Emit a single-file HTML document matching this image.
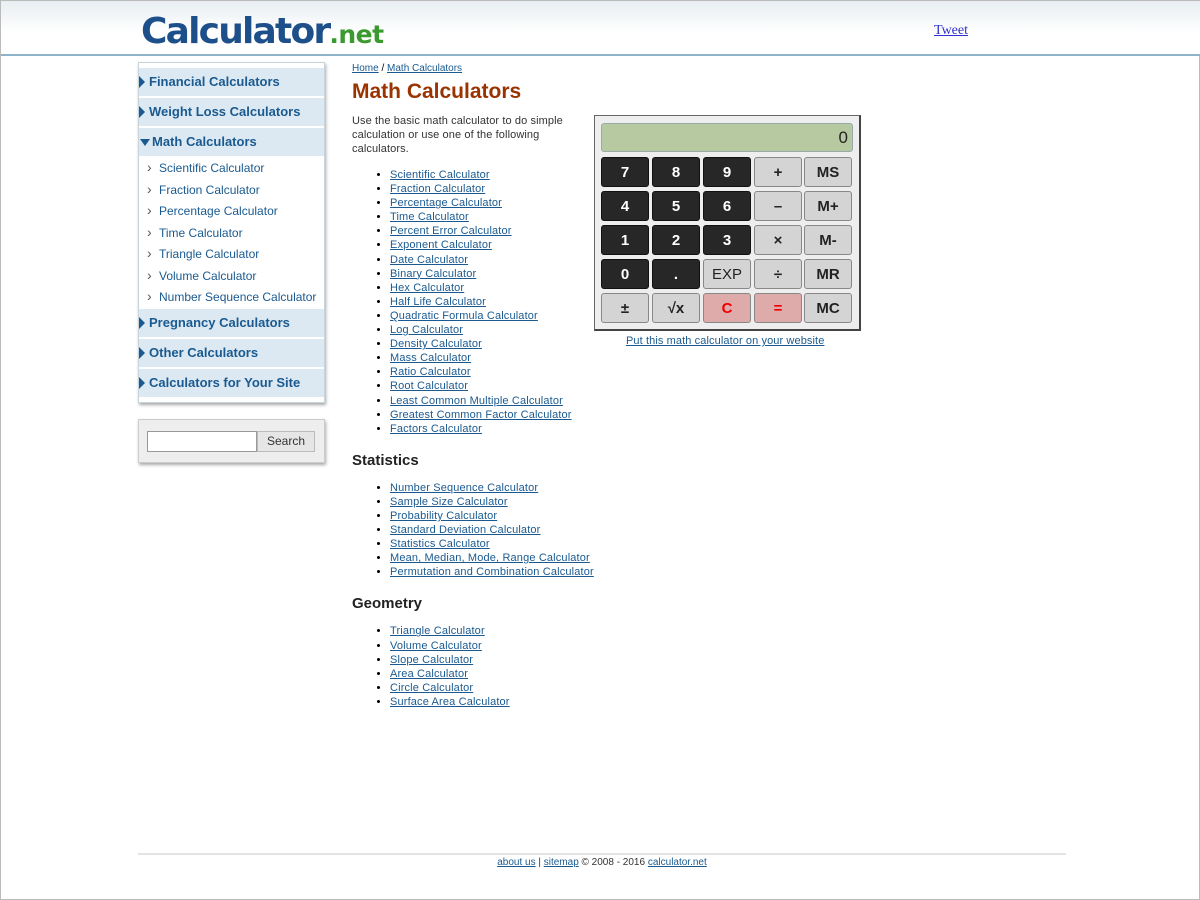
<!DOCTYPE html>
<html><head><meta charset="utf-8"><style>
*{margin:0;padding:0;box-sizing:border-box}
body{width:1200px;height:900px;position:relative;background:#fff;font-family:"Liberation Sans",Arial,sans-serif;overflow:hidden;border:1px solid #bbb}
a{color:#1a5a90;text-decoration:underline}
.hdr{position:absolute;left:0;top:0;width:1200px;height:55px;background:linear-gradient(#e8eef2,#fff 60%);border-bottom:2px solid #8fb3c8}
.logo{position:absolute;left:140px;top:10px;font-size:36px;font-weight:bold;letter-spacing:-1.8px;color:#1d4f8a;font-family:"DejaVu Sans","Liberation Sans",sans-serif}
.logo span{color:#3a9a2f;font-size:25px;letter-spacing:-0.5px}
.tweet{position:absolute;left:933px;top:22px;font-family:"Liberation Serif",serif;font-size:14px;color:#3030d0}
.side{position:absolute;left:137px;top:61px;width:187px;height:341px;border:1px solid #c8d4dc;box-shadow:1px 2px 3px #aaa;background:#fff;padding-top:5px}
.h{height:30px;background:#dce9f2;border-bottom:2px solid #fff;font-size:13px;font-weight:bold;color:#1a5a90;line-height:28px;padding-left:10px;position:relative}
.h:before{content:"";position:absolute;left:0;top:8px;border-left:6px solid #1a5a90;border-top:6px solid transparent;border-bottom:6px solid transparent}
.h.open{padding-left:13px}
.h.open:before{top:11px;left:1px;border-top:7px solid #1a5a90;border-left:5px solid transparent;border-right:5px solid transparent;border-bottom:0}
.s{height:21.5px;font-size:12px;color:#1a5a90;line-height:20px;padding-left:20px;position:relative}
.s:before{content:"›";position:absolute;left:8px;top:-1px;color:#555;font-size:14px}
.srch{position:absolute;left:137px;top:418px;width:187px;height:44px;background:#eee;border:1px solid #ccc;box-shadow:1px 2px 3px #aaa}
.srch .in{position:absolute;left:8px;top:11px;width:110px;height:21px;background:#fff;border:1px solid #999}
.srch .bt{position:absolute;left:118px;top:11px;width:58px;height:21px;background:#e6e6e6;border:1px solid #bbb;font-size:12px;text-align:center;line-height:19px;color:#333}
.main{position:absolute;left:351px;top:62px;width:300px}
.bc{font-size:10px}
h1{font-size:21px;color:#9a3300;margin-top:6px;font-weight:bold}
p{font-size:11px;color:#333;line-height:14px;margin-top:10px;letter-spacing:0.1px;width:225px}
ul{margin:12px 0 0 38px;font-size:11px;line-height:14.1px;letter-spacing:0.15px}
li{list-style:disc;white-space:nowrap}
h2{font-size:15px;color:#222;margin-top:16px;font-weight:bold;white-space:nowrap}
.calc{position:absolute;left:593px;top:114px;width:267px;height:216px;background:#eee;border:1px solid #666;border-right:2px solid #444;border-bottom:2px solid #444}
.disp{position:absolute;left:6px;top:7px;width:252px;height:29px;background:#b7c9a0;border:1px solid #9aa;border-radius:3px;text-align:right;font-size:17px;line-height:28px;padding-right:4px;color:#222}
.b{position:absolute;width:48px;height:30px;border-radius:3px;font-size:15px;font-weight:bold;text-align:center;line-height:30px}
.d{background:#272727;color:#fff;border:1px solid #111}
.g{background:#d4d4d4;color:#222;border:1px solid #888}
.r{background:#deaaaa;color:#e00;border:1px solid #888}
.put{position:absolute;left:625px;top:334px;font-size:11px;letter-spacing:0.1px}
.foot{position:absolute;left:137px;top:852px;width:928px;border-top:2px solid #e4e4e4;text-align:center;font-size:10px;padding-top:2px;color:#333}
</style></head><body>
<div class="hdr"><div class="logo">Calculator<span>.net</span></div><a class="tweet">Tweet</a></div>
<div class="side">
<div class="h">Financial Calculators</div>
<div class="h">Weight Loss Calculators</div>
<div class="h open">Math Calculators</div>
<div class="s">Scientific Calculator</div><div class="s">Fraction Calculator</div><div class="s">Percentage Calculator</div><div class="s">Time Calculator</div><div class="s">Triangle Calculator</div><div class="s">Volume Calculator</div><div class="s">Number Sequence Calculator</div>
<div class="h">Pregnancy Calculators</div>
<div class="h">Other Calculators</div>
<div class="h">Calculators for Your Site</div>
</div>
<div class="srch"><div class="in"></div><div class="bt">Search</div></div>
<div class="main">
<div class="bc"><a>Home</a> / <a>Math Calculators</a></div>
<h1>Math Calculators</h1>
<p>Use the basic math calculator to do simple calculation or use one of the following calculators.</p>
<ul><li><a>Scientific Calculator</a></li><li><a>Fraction Calculator</a></li><li><a>Percentage Calculator</a></li><li><a>Time Calculator</a></li><li><a>Percent Error Calculator</a></li><li><a>Exponent Calculator</a></li><li><a>Date Calculator</a></li><li><a>Binary Calculator</a></li><li><a>Hex Calculator</a></li><li><a>Half Life Calculator</a></li><li><a>Quadratic Formula Calculator</a></li><li><a>Log Calculator</a></li><li><a>Density Calculator</a></li><li><a>Mass Calculator</a></li><li><a>Ratio Calculator</a></li><li><a>Root Calculator</a></li><li><a>Least Common Multiple Calculator</a></li><li><a>Greatest Common Factor Calculator</a></li><li><a>Factors Calculator</a></li></ul>
<h2>Statistics</h2>
<ul><li><a>Number Sequence Calculator</a></li><li><a>Sample Size Calculator</a></li><li><a>Probability Calculator</a></li><li><a>Standard Deviation Calculator</a></li><li><a>Statistics Calculator</a></li><li><a>Mean, Median, Mode, Range Calculator</a></li><li><a>Permutation and Combination Calculator</a></li></ul>
<h2>Geometry</h2>
<ul><li><a>Triangle Calculator</a></li><li><a>Volume Calculator</a></li><li><a>Slope Calculator</a></li><li><a>Area Calculator</a></li><li><a>Circle Calculator</a></li><li><a>Surface Area Calculator</a></li></ul>
</div>
<div class="calc"><div class="disp">0</div>
<div class="b d" style="left:6px;top:41px">7</div><div class="b d" style="left:57px;top:41px">8</div><div class="b d" style="left:108px;top:41px">9</div><div class="b g" style="left:159px;top:41px">+</div><div class="b g" style="left:209px;top:41px">MS</div>
<div class="b d" style="left:6px;top:75px">4</div><div class="b d" style="left:57px;top:75px">5</div><div class="b d" style="left:108px;top:75px">6</div><div class="b g" style="left:159px;top:75px">–</div><div class="b g" style="left:209px;top:75px">M+</div>
<div class="b d" style="left:6px;top:109px">1</div><div class="b d" style="left:57px;top:109px">2</div><div class="b d" style="left:108px;top:109px">3</div><div class="b g" style="left:159px;top:109px">×</div><div class="b g" style="left:209px;top:109px">M-</div>
<div class="b d" style="left:6px;top:143px">0</div><div class="b d" style="left:57px;top:143px">.</div><div class="b g" style="left:108px;top:143px;font-weight:normal">EXP</div><div class="b g" style="left:159px;top:143px">÷</div><div class="b g" style="left:209px;top:143px">MR</div>
<div class="b g" style="left:6px;top:177px">±</div><div class="b g" style="left:57px;top:177px">√x</div><div class="b r" style="left:108px;top:177px">C</div><div class="b r" style="left:159px;top:177px">=</div><div class="b g" style="left:209px;top:177px">MC</div>
</div>
<a class="put">Put this math calculator on your website</a>
<div class="foot"><a>about us</a> | <a>sitemap</a> © 2008 - 2016 <a>calculator.net</a></div>
</body></html>
